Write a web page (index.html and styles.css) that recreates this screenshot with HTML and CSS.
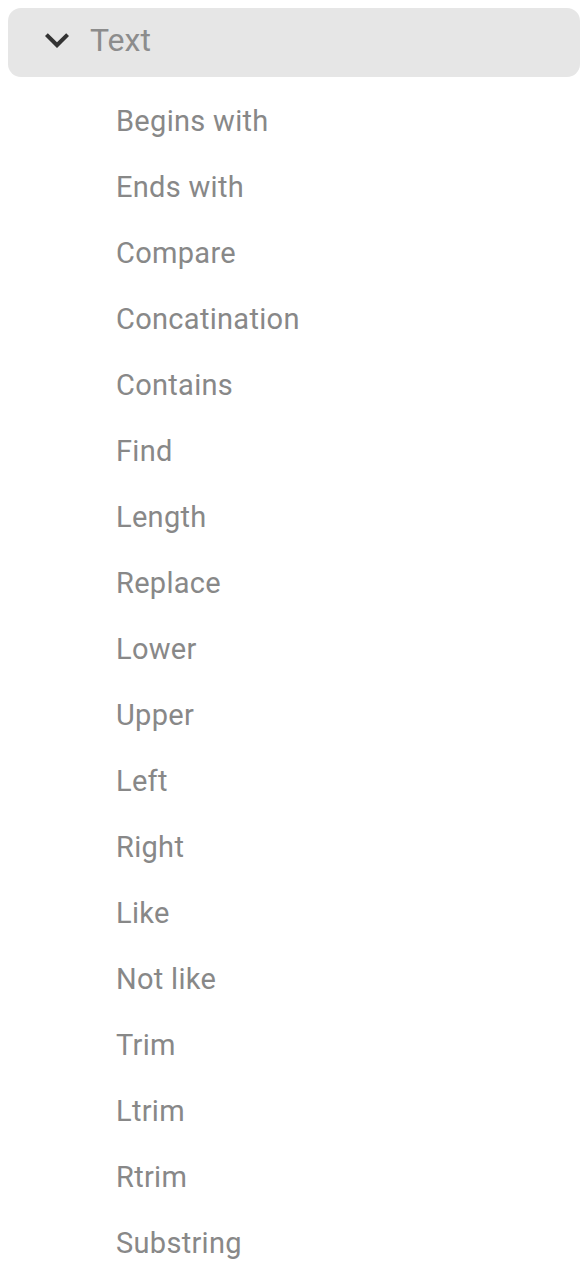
FILE: index.html
```html
<!DOCTYPE html>
<html lang="en">
<head>
<meta charset="utf-8">
<title>Text functions</title>
<link rel="stylesheet" href="styles.css">
</head>
<body>
<div class="group">
  <div class="group-header">
    <svg class="chevron" viewBox="0 0 24 24" width="48" height="48" aria-hidden="true">
      <path d="M16.59 8.59L12 13.17 7.41 8.59 6 10l6 6 6-6z" fill="#333333"/>
    </svg>
    <span class="group-title">Text</span>
  </div>
  <ul class="items">
    <li class="item">Begins with</li>
    <li class="item">Ends with</li>
    <li class="item">Compare</li>
    <li class="item">Concatination</li>
    <li class="item">Contains</li>
    <li class="item">Find</li>
    <li class="item">Length</li>
    <li class="item">Replace</li>
    <li class="item">Lower</li>
    <li class="item">Upper</li>
    <li class="item">Left</li>
    <li class="item">Right</li>
    <li class="item">Like</li>
    <li class="item">Not like</li>
    <li class="item">Trim</li>
    <li class="item">Ltrim</li>
    <li class="item">Rtrim</li>
    <li class="item">Substring</li>
  </ul>
</div>
</body>
</html>
```
FILE: styles.css
```css
html, body {
  background: #ffffff;
}
body {
  margin: 8px;
  font-family: Roboto, "Noto Sans", sans-serif;
}
.group-header {
  display: flex;
  align-items: center;
  height: 69px;
  background: #e6e6e6;
  border-radius: 13px;
  padding-left: 25px;
  box-sizing: border-box;
}
.chevron {
  display: block;
  margin-top: -6px;
  flex: none;
}
.group-title {
  margin-left: 9px;
  margin-top: -5px;
  font-size: 32px;
  color: #8c8c8c;
  line-height: 1;
}
.items {
  list-style: none;
  margin: 0;
  padding: 11px 0 0 108px;
}
.item {
  height: 66px;
  line-height: 66px;
  font-size: 29px;
  letter-spacing: 0.3px;
  color: #888888;
}
```
